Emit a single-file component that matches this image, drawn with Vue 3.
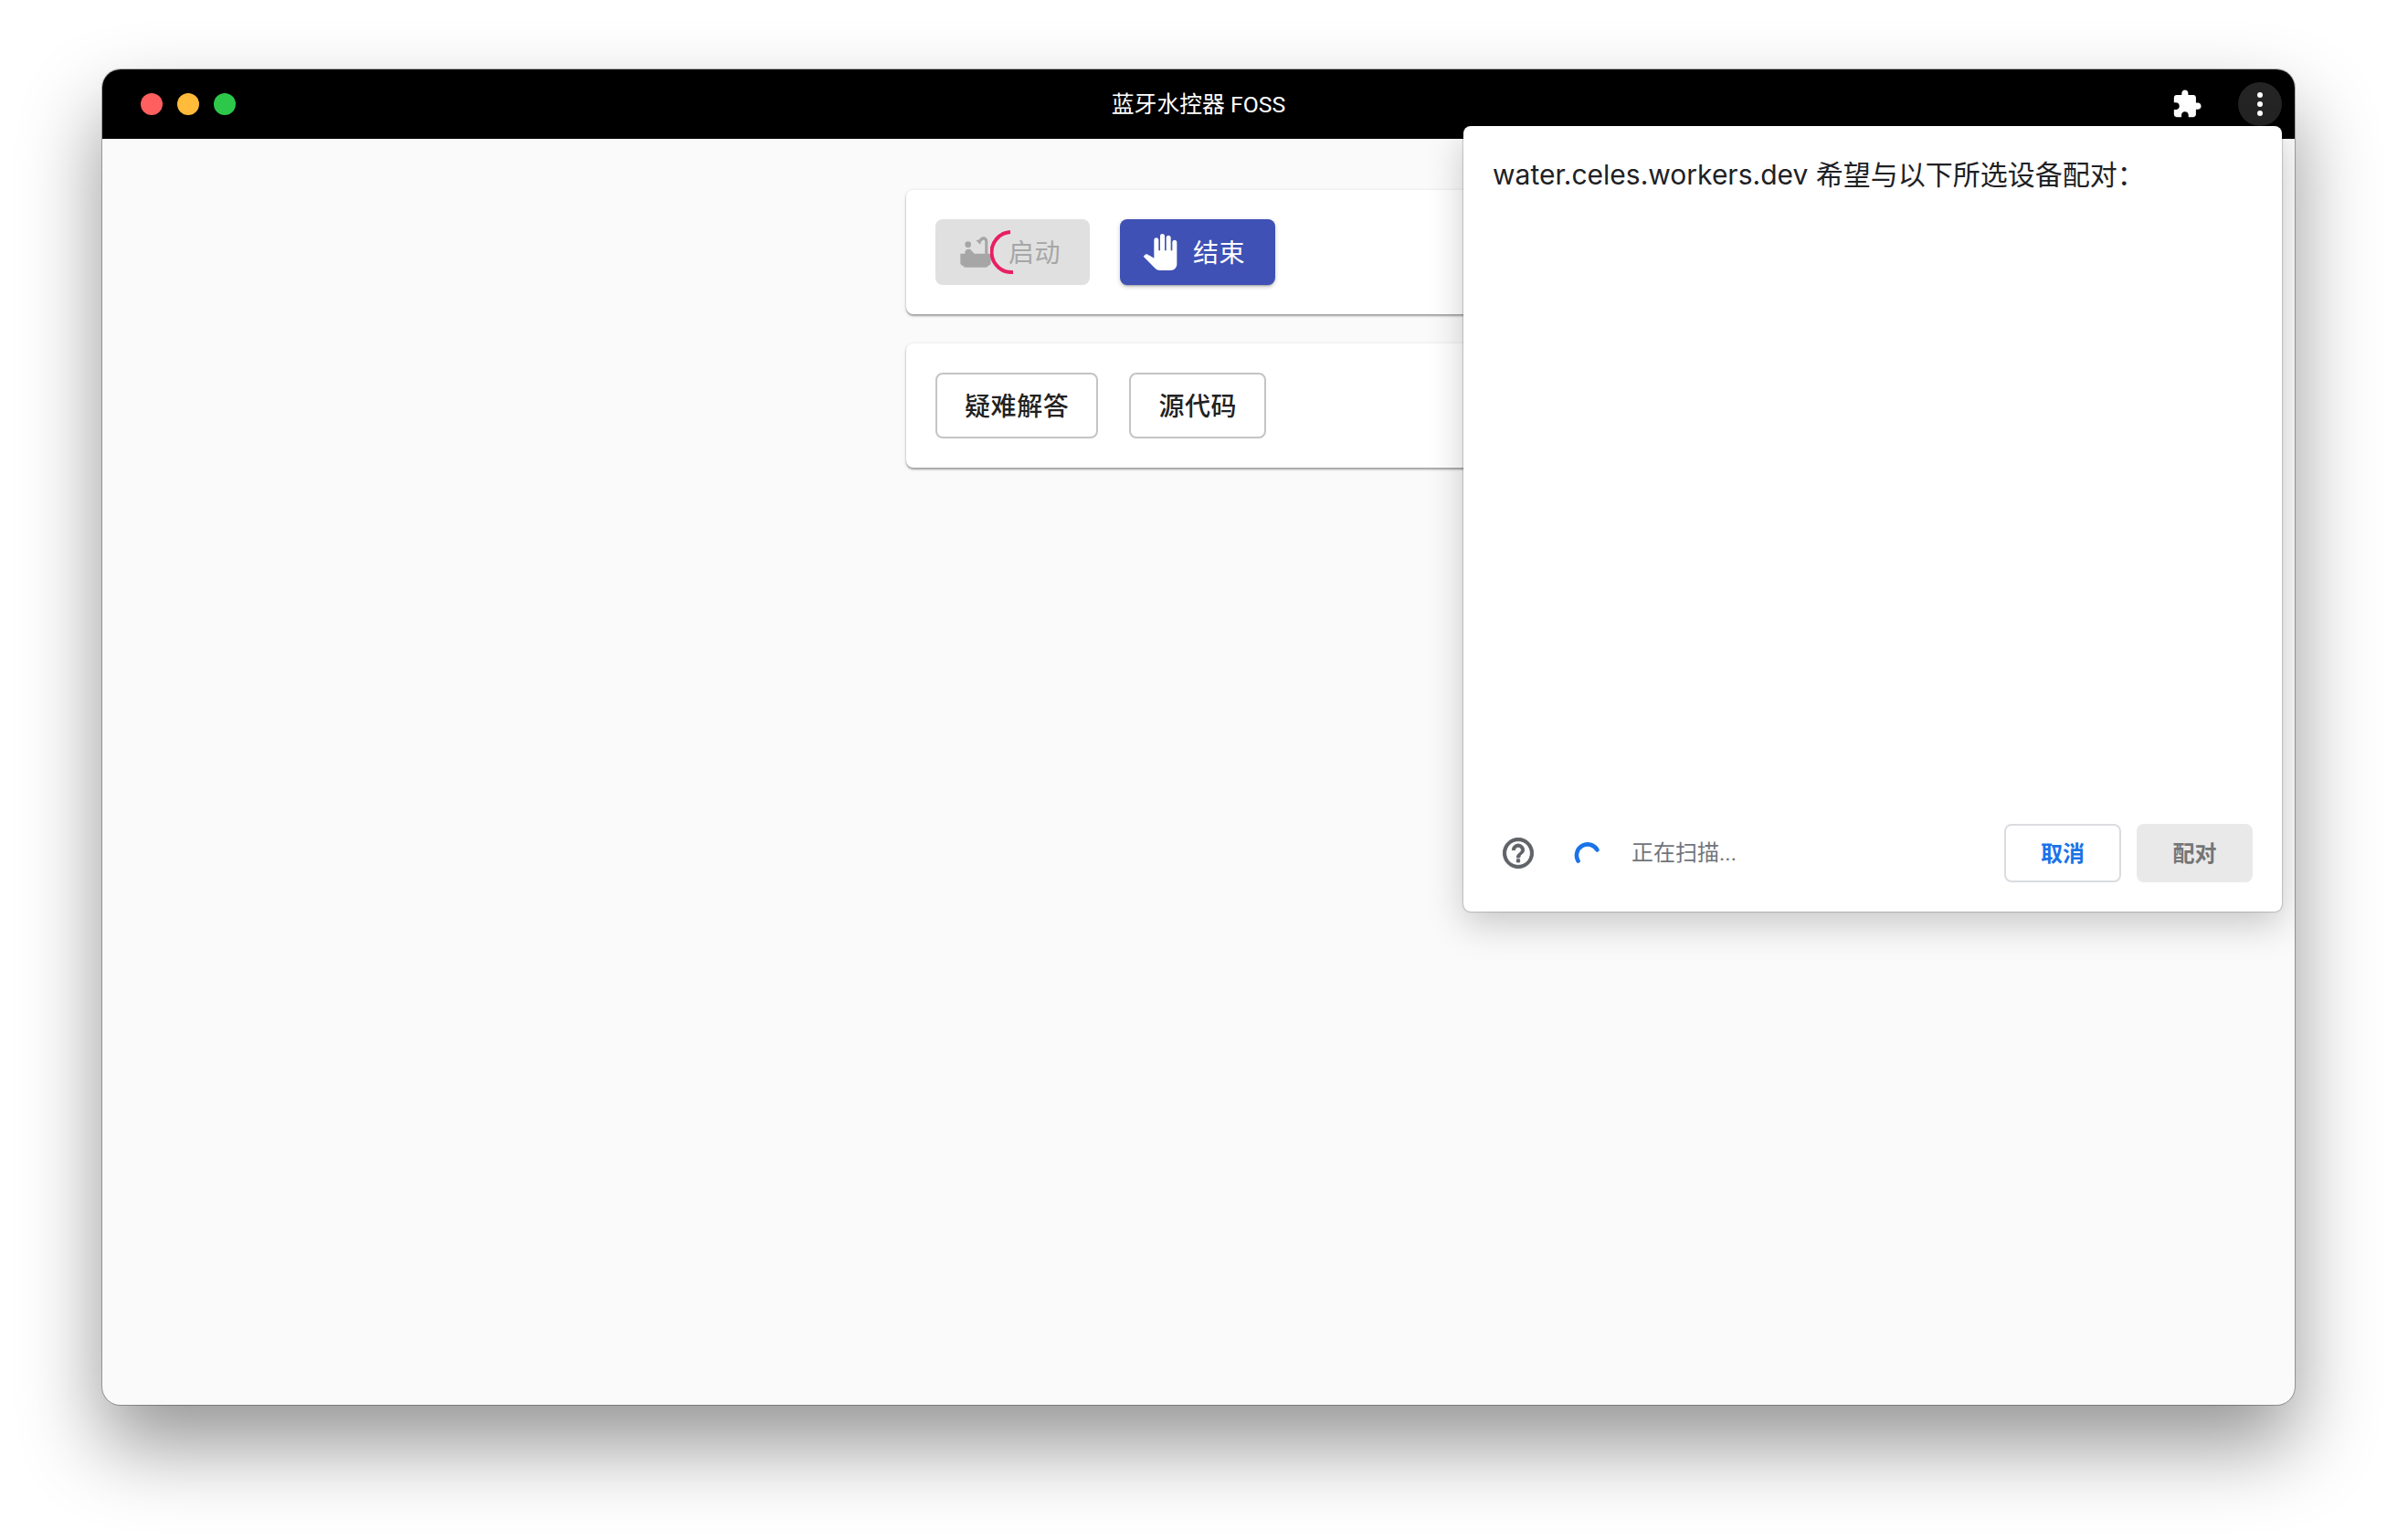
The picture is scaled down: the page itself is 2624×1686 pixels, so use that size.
<script setup>
const paths = {
  tub: 'M20 13V4.83C20 3.27 18.73 2 17.17 2c-.75 0-1.47.3-2.02.85l-1.25 1.25c-.16-.05-.33-.08-.51-.08-.4 0-.77.12-1.08.32l2.76 2.76c.2-.31.32-.68.32-1.08 0-.18-.03-.34-.07-.5l1.25-1.25c.17-.17.41-.27.65-.27.51 0 .92.41.92.92V13h-6.85c-.3-.21-.57-.45-.82-.72l-1.4-1.55c-.19-.21-.43-.38-.67-.5-.29-.15-.62-.23-.96-.23C6 10.01 5 11.01 5 12.25V13H2v6c0 1.1.9 2 2 2 0 .55.45 1 1 1h14c.55 0 1-.45 1-1 1.1 0 2-.9 2-2v-6h-2z',
  hand: 'M23 5.5V20c0 2.2-1.8 4-4 4h-7.3c-1.08 0-2.1-.43-2.85-1.19L1 14.83s1.26-1.23 1.3-1.25c.22-.19.49-.29.79-.29.22 0 .42.06.6.16.04.01 4.31 2.46 4.31 2.46V4c0-.83.67-1.5 1.5-1.5S11 3.17 11 4v7h1V1.5c0-.83.67-1.5 1.5-1.5S15 .67 15 1.5V11h1V2.5c0-.83.67-1.5 1.5-1.5s1.5.67 1.5 1.5V11h1V5.5c0-.83.67-1.5 1.5-1.5s1.5.67 1.5 1.5z',
  puzzle: 'M20.5 11H19V7c0-1.1-.9-2-2-2h-4V3.5C13 2.12 11.88 1 10.5 1S8 2.12 8 3.5V5H4c-1.1 0-1.99.9-1.99 2v3.8H3.5c1.49 0 2.7 1.21 2.7 2.7s-1.21 2.7-2.7 2.7H2V20c0 1.1.9 2 2 2h3.8v-1.5c0-1.49 1.21-2.7 2.7-2.7 1.49 0 2.7 1.21 2.7 2.7V22H17c1.1 0 2-.9 2-2v-4h1.5c1.38 0 2.5-1.12 2.5-2.5S21.88 11 20.5 11z',
  help: 'M11 18h2v-2h-2v2zm1-16C6.48 2 2 6.48 2 12s4.48 10 10 10 10-4.48 10-10S17.52 2 12 2zm0 18c-4.41 0-8-3.59-8-8s3.59-8 8-8 8 3.59 8 8-3.59 8-8 8zm0-14c-2.21 0-4 1.79-4 4h2c0-1.1.9-2 2-2s2 .9 2 2c0 2-3 1.75-3 5h2c0-2.25 3-2.5 3-5 0-2.21-1.79-4-4-4z'
}
</script>

<template>
  <div class="page">
    <div class="window">
      <header class="titlebar">
        <div class="lights">
          <span class="light red"></span>
          <span class="light yellow"></span>
          <span class="light green"></span>
        </div>
        <div class="title">蓝牙水控器 FOSS</div>
        <div class="tools">
          <svg class="puzzle" viewBox="0 0 24 24"><path :d="paths.puzzle" /></svg>
          <div class="more">
            <i></i><i></i><i></i>
          </div>
        </div>
      </header>
      <main class="content">
        <section class="card">
          <button class="btn disabled">
            <svg class="start-icon" viewBox="0 0 24 24"><circle cx="7" cy="7" r="2" /><path :d="paths.tub" /></svg>
            <span>启动</span>
            <svg class="progress" viewBox="0 0 48 48"><path d="M22 2.1A22 22 0 1 0 25 46" /></svg>
          </button>
          <button class="btn primary">
            <svg class="start-icon" viewBox="0 0 24 24"><path :d="paths.hand" /></svg>
            <span>结束</span>
          </button>
        </section>
        <section class="card links">
          <button class="btn outlined">疑难解答</button>
          <button class="btn outlined">源代码</button>
        </section>
      </main>
      <aside class="dialog">
        <div class="prompt">water.celes.workers.dev 希望与以下所选设备配对：</div>
        <footer class="dialog-foot">
          <svg class="help" viewBox="0 0 24 24"><path :d="paths.help" /></svg>
          <svg class="scan" viewBox="0 0 28 28"><path d="M4.6 22.6A12 12 0 0 1 25.4 10.4" /></svg>
          <span class="status">正在扫描...</span>
          <button class="chip cancel">取消</button>
          <button class="chip pair">配对</button>
        </footer>
      </aside>
    </div>
  </div>
</template>

<style>
html, body { margin: 0; background: #ffffff; }
</style>

<style scoped>
.page {
  box-sizing: border-box;
  width: 2624px;
  height: 1686px;
  padding: 76px 112px 148px;
  font-family: Roboto, "Noto Sans CJK SC", sans-serif;
  overflow: hidden;
}
.window {
  position: relative;
  display: flex;
  flex-direction: column;
  height: 100%;
  border-radius: 20px;
  background: #fafafa;
  overflow: hidden;
  box-shadow: 0 0 0 1px rgba(0, 0, 0, 0.28), 0 44px 88px rgba(0, 0, 0, 0.42);
}
.titlebar {
  display: grid;
  grid-template-columns: 1fr auto 1fr;
  align-items: center;
  height: 76px;
  background: #000;
  color: #fff;
  flex: none;
}
.lights { display: flex; gap: 16px; padding-left: 42px; }
.light { width: 24px; height: 24px; border-radius: 50%; }
.red { background: #ff5f5e; }
.yellow { background: #ffbb39; }
.green { background: #2dc84a; }
.title { font-size: 24.8px; font-weight: 400; padding-bottom: 5px; }
.tools { display: flex; align-items: center; justify-content: flex-end; gap: 38px; padding-right: 15px; }
.puzzle { width: 34px; height: 34px; fill: #fff; }
.more {
  display: flex;
  flex-direction: column;
  align-items: center;
  justify-content: center;
  gap: 4px;
  width: 48px;
  height: 48px;
  border-radius: 50%;
  background: #242424;
  transform: translateX(1px);
}
.more i { width: 6px; height: 6px; border-radius: 50%; background: #fff; }
.content {
  display: flex;
  flex-direction: column;
  align-items: center;
  gap: 32px;
  padding-top: 56px;
  flex: 1;
}
.card {
  box-sizing: border-box;
  display: flex;
  gap: 33px;
  width: 640px;
  height: 136px;
  padding: 32px;
  background: #fff;
  border-radius: 8px;
  box-shadow: 0 2px 2px rgba(0, 0, 0, 0.3), 0 1px 4px rgba(0, 0, 0, 0.14);
}
.links { gap: 34px; }
.btn {
  position: relative;
  box-sizing: border-box;
  display: inline-flex;
  align-items: center;
  justify-content: center;
  height: 72px;
  padding: 3px 32px 0;
  border: 0;
  border-radius: 8px;
  font: 400 28px/48px Roboto, "Noto Sans CJK SC", sans-serif;
  letter-spacing: 0.4px;
}
.start-icon { width: 40px; height: 40px; margin: -3px 16px 0 -9px; fill: currentColor; flex: none; }
.disabled { background: #e0e0e0; color: #a6a6a6; width: 169px; }
.disabled .start-icon { margin-left: -8px; }
.primary {
  background: #3f51b5;
  color: #fff;
  width: 170px;
  box-shadow: 0 3px 2px -2px rgba(0, 0, 0, 0.25), 0 2px 5px rgba(0, 0, 0, 0.2);
}
.outlined {
  padding: 3px 30px 0;
  border: 2px solid #c4c4c4;
  background: #fff;
  color: #222;
  font-weight: 500;
  letter-spacing: 0.6px;
}
.progress {
  position: absolute;
  left: 60px;
  top: 12px;
  width: 48px;
  height: 48px;
  fill: none;
  stroke: #e91e63;
  stroke-width: 4;
}
.dialog {
  position: absolute;
  top: 62px;
  right: 14px;
  box-sizing: border-box;
  display: flex;
  flex-direction: column;
  justify-content: space-between;
  width: 896px;
  height: 860px;
  padding: 34px 32px 32px;
  background: #fff;
  border-radius: 8px;
  box-shadow: 0 0 2px rgba(0, 0, 0, 0.55), 0 14px 40px rgba(0, 0, 0, 0.2);
}
.prompt { font: 400 30px/38px Inter, "Noto Sans CJK SC", sans-serif; color: #202124; }
.dialog-foot { display: flex; align-items: center; height: 64px; }
.help { width: 40px; height: 40px; margin-left: 8px; fill: #5f6368; stroke: #5f6368; stroke-width: 0.5; flex: none; }
.scan {
  width: 28px;
  height: 28px;
  margin-left: 41px;
  fill: none;
  stroke: #1a73e8;
  stroke-width: 4.6;
  stroke-linecap: round;
  flex: none;
}
.status { margin-left: 35px; padding-bottom: 5px; font-size: 24px; color: #70757a; flex: 1; }
.chip {
  box-sizing: border-box;
  width: 127px;
  height: 64px;
  padding-bottom: 5px;
  border-radius: 8px;
  font: 600 24px Roboto, "Noto Sans CJK SC", sans-serif;
}
.cancel { width: 128px; background: #fff; border: 2px solid #dadce0; color: #1a73e8; margin-right: 17px; }
.pair { background: #e9e9ea; border: 0; color: #757575; }
</style>
